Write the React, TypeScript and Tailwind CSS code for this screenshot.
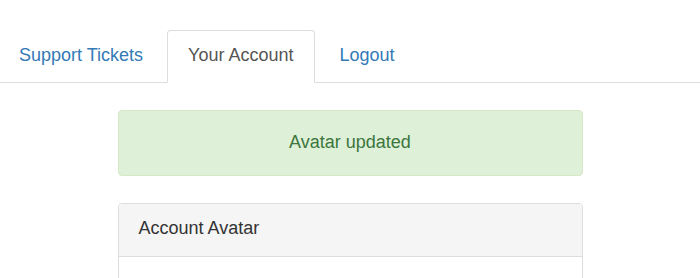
import React from 'react';

const tabs = [
  { label: 'Support Tickets', active: false },
  { label: 'Your Account', active: true },
  { label: 'Logout', active: false },
];

const App: React.FC = () => {
  return (
    <div className="min-h-screen bg-white pt-[30px] font-['Liberation_Sans',Arial,sans-serif] text-[18px] text-[#333]">
      <ul className="flex border-b border-[#ddd]">
        {tabs.map((tab) => (
          <li key={tab.label} className="-mb-px mr-[5px]">
            {tab.active ? (
              <a className="block rounded-t-[4px] border border-[#ddd] border-b-white bg-white pl-[20px] pr-[21px] pt-[11px] pb-[14px] leading-[26px] text-[#555]">
                {tab.label}
              </a>
            ) : (
              <a href="#" className="block rounded-t-[4px] border border-transparent px-[18px] pt-[11px] pb-[14px] leading-[26px] text-[#337ab7]">
                {tab.label}
              </a>
            )}
          </li>
        ))}
      </ul>

      <div className="mx-auto w-[465px]">
        <div className="mt-[27px] rounded-[4px] border border-[#d6e9c6] bg-[#dff0d8] pt-[18px] pb-[20px] text-center leading-[26px] text-[#3c763d]">
          Avatar updated
        </div>

        <div className="mt-[27px] rounded-[4px] border border-[#ddd] bg-white">
          <div className="rounded-t-[3px] border-b border-[#ddd] bg-[#f5f5f5] px-[20px] pt-[11px] pb-[15px] leading-[26px] text-[#333]">
            Account Avatar
          </div>
          <div className="h-[120px]" />
        </div>
      </div>
    </div>
  );
};

export default App;
